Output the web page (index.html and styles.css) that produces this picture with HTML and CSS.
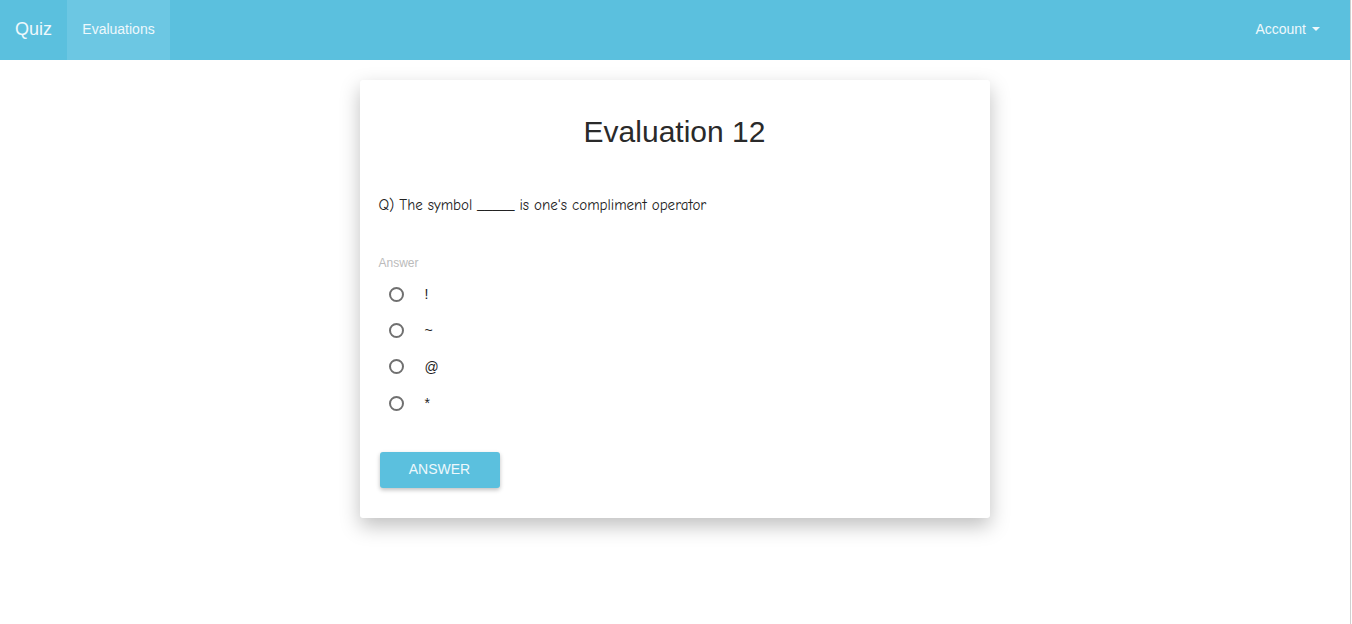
FILE: index.html
```html
<!DOCTYPE html>
<html>
<head>
<meta charset="utf-8">
<link rel="stylesheet" href="styles.css">
</head>
<body>
<div class="page">
  <nav class="navbar">
    <a class="brand">Quiz</a>
    <a class="nav-item active">Evaluations</a>
    <div class="spacer"></div>
    <a class="nav-item account">Account <span class="caret"></span></a>
  </nav>
  <main class="main">
    <section class="card">
      <h1 class="title">Evaluation 12</h1>
      <p class="question">Q) The symbol _____ is one's compliment operator</p>
      <div class="answer-label">Answer</div>
      <div class="options">
        <label class="option"><span class="radio"></span><span class="opt-text">!</span></label>
        <label class="option"><span class="radio"></span><span class="opt-text">~</span></label>
        <label class="option"><span class="radio"></span><span class="opt-text">@</span></label>
        <label class="option"><span class="radio"></span><span class="opt-text">*</span></label>
      </div>
      <button class="btn">ANSWER</button>
    </section>
  </main>
</div>
</body>
</html>
```
FILE: styles.css
```css
* { box-sizing: border-box; }
html, body { margin: 0; padding: 0; background: #fff; }
body { font-family: "Liberation Sans", Arial, sans-serif; color: #333; }
.page { width: 1351px; min-height: 624px; border-right: 1px solid #d0d0d0; }
.navbar {
  height: 60px; background: #5bc0de; display: flex; align-items: stretch;
}
.brand {
  display: flex; align-items: center; padding: 0 15px 2px; font-size: 18px; color: #eef8fc;
}
.nav-item {
  display: flex; align-items: center; padding: 0 15px 2px; font-size: 14px; color: #eef8fc;
}
.nav-item.active { background: #6cc7e3; padding: 0 15px 2px 15px; width: 103px; justify-content: center; }
.spacer { flex: 1; }
.account { padding-right: 30px; }
.caret {
  display: inline-block; width: 0; height: 0; margin-left: 6px;
  border-left: 4px solid transparent; border-right: 4px solid transparent;
  border-top: 4px solid #eef8fc;
}
.main { display: flex; justify-content: center; padding-top: 20px; }
.card {
  width: 630px; margin-left: -1px; background: #fff; border-radius: 3px;
  box-shadow: 0 8px 20px rgba(0,0,0,0.25);
  padding: 30px 19px 30px 19px;
}
.title {
  margin: 0; text-align: center; font-weight: 400; font-size: 30px; line-height: 44px; color: #2a2a2a;
}
.question {
  margin: 40px 0 0 0; font-family: "Comic Neue", "Lato", sans-serif; font-size: 15px; line-height: 22px; color: #222;
}
.answer-label { margin-top: 40px; font-size: 12px; color: #bbb; line-height: 14px; }
.options { display: flex; flex-direction: column; margin-top: 6px; }
.option { display: flex; align-items: center; height: 36.3px; }
.radio {
  width: 15px; height: 15px; border: 2px solid #707070; border-radius: 50%; margin-left: 10px;
}
.opt-text { margin-left: 21px; font-size: 14px; color: #222; }
.btn {
  margin-top: 31px; margin-left: 1px; width: 120px; height: 36px; border: 0; border-radius: 3px;
  background: #5bc0de; color: #eef8fc; font-family: "Liberation Sans", Arial, sans-serif; font-size: 14px;
  box-shadow: 0 2px 4px rgba(0,0,0,0.25); padding: 0 0 2px;
}
```
